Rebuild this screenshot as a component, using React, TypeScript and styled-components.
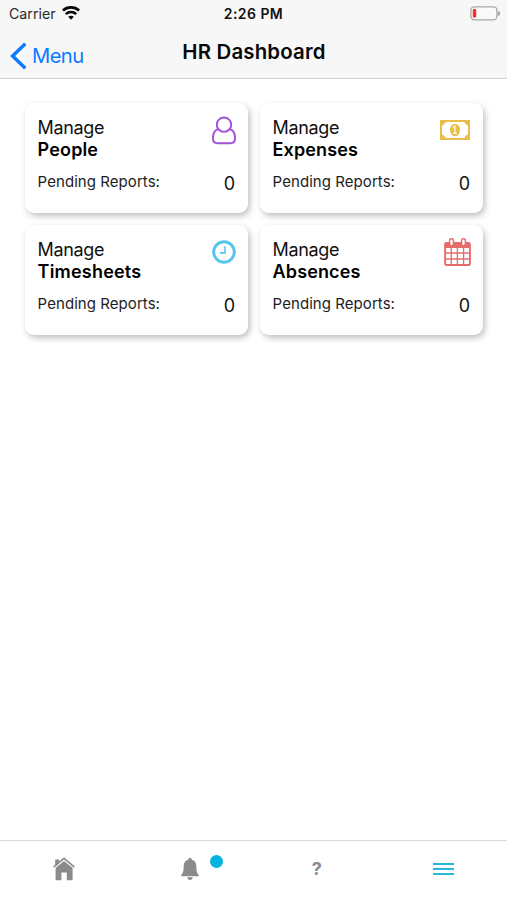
import React from 'react';
import styled, { createGlobalStyle } from 'styled-components';

const GlobalStyle = createGlobalStyle`
  * { box-sizing: border-box; }
  body { margin: 0; background: #fff; font-family: Inter, "Liberation Sans", sans-serif; color: #111; }
  svg { display: block; flex: none; }
`;

const Screen = styled.div`
  width: 507px;
  height: 900px;
  display: flex;
  flex-direction: column;
  background: #fff;
  overflow: hidden;
`;

const Header = styled.header`
  height: 79px;
  flex: none;
  background: #f7f7f7;
  border-bottom: 1px solid #d2d2d2;
`;

const StatusBar = styled.div`
  height: 27px;
  display: grid;
  grid-template-columns: 1fr auto 1fr;
  align-items: center;
  padding: 0 6px 0 9px;
`;

const Carrier = styled.div`
  display: flex;
  align-items: center;
  gap: 6px;
  font-size: 14.2px;
  line-height: 27px;
  color: #2a2a2a;
`;

const Clock = styled.div`
  margin-right: 3px;
  font-size: 14px;
  font-weight: 600;
  letter-spacing: 0.45px;
`;

const Battery = styled.div`
  display: flex;
  justify-content: flex-end;
`;

const NavBar = styled.div`
  height: 51px;
  display: grid;
  grid-template-columns: 1fr auto 1fr;
  padding: 0 9px 0 10px;
`;

const BackButton = styled.button`
  display: flex;
  align-items: center;
  gap: 5px;
  height: 28px;
  margin-top: 15px;
  padding: 0;
  border: 0;
  background: none;
  font: 400 20.2px/28px Inter, sans-serif;
  letter-spacing: -0.6px;
  color: #0a7aff;
`;

const Title = styled.h1`
  margin: 11px 0 0;
  font-size: 20.4px;
  line-height: 28px;
  font-weight: 600;
  letter-spacing: 0.18px;
  color: #080808;
`;

const CardGrid = styled.main`
  flex: 1;
  display: grid;
  grid-template-columns: 223px 223px;
  grid-auto-rows: 110px;
  gap: 12px;
  padding: 24px 25px;
`;

const Card = styled.section`
  display: flex;
  flex-direction: column;
  border-radius: 9px;
  padding: 14px 13px 0 12.6px;
  background: #fff;
  box-shadow: 2px 3px 6px rgba(0, 0, 0, 0.25);
`;

const CardTop = styled.div`
  display: flex;
  justify-content: space-between;
  height: 44px;
`;

const Action = styled.div`
  font-size: 18px;
  line-height: 22px;
  letter-spacing: -0.35px;
`;

const Subject = styled.div<{ $tracking: number }>`
  font-size: 18px;
  line-height: 22px;
  font-weight: 600;
  letter-spacing: ${p => p.$tracking}px;
  color: #000;
`;

const IconSlot = styled.div<{ $top: number; $shift?: number }>`
  margin-top: ${p => p.$top}px;
  margin-right: ${p => -(p.$shift ?? 0)}px;
`;

const CardBottom = styled.div`
  display: flex;
  justify-content: space-between;
  align-items: flex-start;
  margin-top: 11px;
`;

const Label = styled.span`
  font-size: 15px;
  line-height: 20px;
  letter-spacing: 0.06px;
  color: #1d1d1d;
`;

const Count = styled.span`
  font-size: 18px;
  line-height: 24px;
`;

const TabBar = styled.nav`
  height: 60px;
  flex: none;
  display: grid;
  grid-template-columns: repeat(4, 1fr);
  border-top: 1px solid #d9d9d9;
`;

const Tab = styled.div`
  position: relative;
  display: flex;
  justify-content: center;
  align-items: center;
  height: 56px;
  color: #8b8b8d;
`;

const Badge = styled.span`
  position: absolute;
  left: 83px;
  top: 14px;
  width: 13px;
  height: 13px;
  border-radius: 50%;
  background: #04b4de;
`;

const Question = styled.span`
  font-size: 18px;
  font-weight: 700;
  line-height: 24px;
`;

const WifiIcon = () => (
  <svg width="18" height="15" viewBox="0 0 18 15" fill="none" stroke="#080808">
    <path d="M.9 4.4c4.5-4 11.7-4 16.2 0" strokeWidth="2.7" />
    <path d="M3.8 8.1c2.9-2.7 7.5-2.7 10.4 0" strokeWidth="2.5" />
    <path d="M6.2 10.8 9 13.7l2.8-2.9c-1.5-1.5-4.1-1.5-5.6 0Z" fill="#080808" stroke="none" />
  </svg>
);

const BatteryIcon = () => (
  <svg width="31" height="15" viewBox="0 0 31 15">
    <rect x=".9" y=".8" width="26" height="13" rx="3.5" fill="#fafafa" stroke="#a8a8a8" strokeWidth="1.3" />
    <rect x="2.8" y="3" width="3.4" height="8.6" rx="1" fill="#fb2b2c" />
    <path d="M28.2 5c2.5 1 2.5 4 0 5Z" fill="#999" />
  </svg>
);

const BackIcon = () => (
  <svg width="17" height="28" viewBox="0 0 17 28" fill="none" stroke="#0a7aff" strokeWidth="3.4">
    <path d="M15.3 1.8 2.6 14l12.7 12.2" />
  </svg>
);

const PersonIcon = () => (
  <svg width="26" height="29" viewBox="0 0 26 29" fill="none" stroke="#a350dc" strokeWidth="1.9">
    <circle cx="13" cy="8.7" r="7.2" />
    <path d="M7.2 13.2c-3.5 1-5.3 4.7-5.3 9.3 0 3.2 1.7 4.7 4.6 4.7h13c2.9 0 4.6-1.5 4.6-4.7 0-4.6-1.8-8.3-5.3-9.3" />
  </svg>
);

const MoneyIcon = () => (
  <svg width="30" height="20" viewBox="0 0 30 20" fill="none" stroke="#e9bd49">
    <rect x="1" y="1" width="28" height="18" strokeWidth="2" />
    <path d="M1 1h4.2A4.2 4.2 0 0 1 1 5.2ZM29 1h-4.2A4.2 4.2 0 0 0 29 5.2ZM1 19v-4.2A4.2 4.2 0 0 1 5.2 19ZM29 19v-4.2a4.2 4.2 0 0 0-4.2 4.2Z" fill="#e9bd49" strokeWidth=".8" />
    <ellipse cx="15" cy="10" rx="5" ry="6.3" fill="#e9bd49" stroke="none" />
    <path d="m12.9 7.8 2.1-1.6v7M13 13.2h4" stroke="#fff6dd" strokeWidth="1.4" />
  </svg>
);

const TimeIcon = () => (
  <svg width="24" height="24" viewBox="0 0 24 24" fill="none" stroke="#55c5ed">
    <circle cx="12" cy="12" r="10.3" strokeWidth="3" />
    <path d="M13 6.2v6.7H8" strokeWidth="1.6" />
  </svg>
);

const CalendarIcon = () => (
  <svg width="27" height="28" viewBox="0 0 27 28" fill="none" stroke="#e66b6b">
    <path d="M1 4.5h25V10H1Z" fill="#e66b6b" stroke="none" />
    <rect x="1.1" y="5" width="24.8" height="22" rx="1.6" strokeWidth="1.9" />
    <path d="M7.3 10v17M13.4 10v17M19.6 10v17M1 15h25M1 21h25" strokeWidth="1.3" />
    <rect x="5.6" y=".8" width="3.8" height="7" rx="1.8" fill="#fff" strokeWidth="1.5" />
    <rect x="17.6" y=".8" width="3.8" height="7" rx="1.8" fill="#fff" strokeWidth="1.5" />
  </svg>
);

const HomeIcon = () => (
  <svg width="24" height="24" viewBox="-2 0 24 24" fill="currentColor">
    <path d="M2.2 2.4h3.8v4L2.2 9.5ZM11 4l8.6 6.8v12.4h-5.8v-7.6H8.4v7.6H2.6V10.8Z" />
    <path d="M.6 10.2 11 1.4l10.4 8.8" fill="none" stroke="currentColor" strokeWidth="1.7" />
    <path d="M1.8 11 11 3.2l9.2 7.8" fill="none" stroke="#fff" strokeOpacity=".75" strokeWidth=".8" />
  </svg>
);

const BellIcon = () => (
  <svg width="18" height="23" viewBox="0 0 18 23" fill="currentColor">
    <path d="M9 0c1.1 0 1.7.7 1.8 1.7 3 .8 4.5 3.1 4.5 6.4 0 5.3.9 7.3 2.4 8.8v1.3H.3v-1.3c1.5-1.5 2.4-3.5 2.4-8.8 0-3.3 1.5-5.6 4.5-6.4C7.3.7 7.9 0 9 0ZM6.3 19.2h5.4c-.2 1.7-1.2 2.7-2.7 2.7s-2.5-1-2.7-2.7Z" />
  </svg>
);

const MenuIcon = () => (
  <svg width="21" height="14" viewBox="0 0 21 14" stroke="#25b8d9" strokeWidth="1.8">
    <path d="M0 2h21M0 7h21M0 12h21" />
  </svg>
);

const cards = [
  { name: 'People', tracking: 0.15, icon: <PersonIcon />, top: -1.4, shift: 1.5 },
  { name: 'Expenses', tracking: 0.12, icon: <MoneyIcon />, top: 3 },
  { name: 'Timesheets', tracking: 0.2, icon: <TimeIcon />, top: 0.5, shift: 0.5 },
  { name: 'Absences', tracking: 0.12, icon: <CalendarIcon />, top: -1, shift: 0.5 },
];

export default function App() {
  return (
    <Screen>
      <GlobalStyle />
      <Header>
        <StatusBar>
          <Carrier>Carrier <WifiIcon /></Carrier>
          <Clock>2:26 PM</Clock>
          <Battery><BatteryIcon /></Battery>
        </StatusBar>
        <NavBar>
          <BackButton><BackIcon />Menu</BackButton>
          <Title>HR Dashboard</Title>
        </NavBar>
      </Header>
      <CardGrid>
        {cards.map(card => (
          <Card key={card.name}>
            <CardTop>
              <div>
                <Action>Manage</Action>
                <Subject $tracking={card.tracking}>{card.name}</Subject>
              </div>
              <IconSlot $top={card.top} $shift={card.shift}>{card.icon}</IconSlot>
            </CardTop>
            <CardBottom>
              <Label>Pending Reports:</Label>
              <Count>0</Count>
            </CardBottom>
          </Card>
        ))}
      </CardGrid>
      <TabBar>
        <Tab><HomeIcon /></Tab>
        <Tab><BellIcon /><Badge /></Tab>
        <Tab><Question>?</Question></Tab>
        <Tab><MenuIcon /></Tab>
      </TabBar>
    </Screen>
  );
}
